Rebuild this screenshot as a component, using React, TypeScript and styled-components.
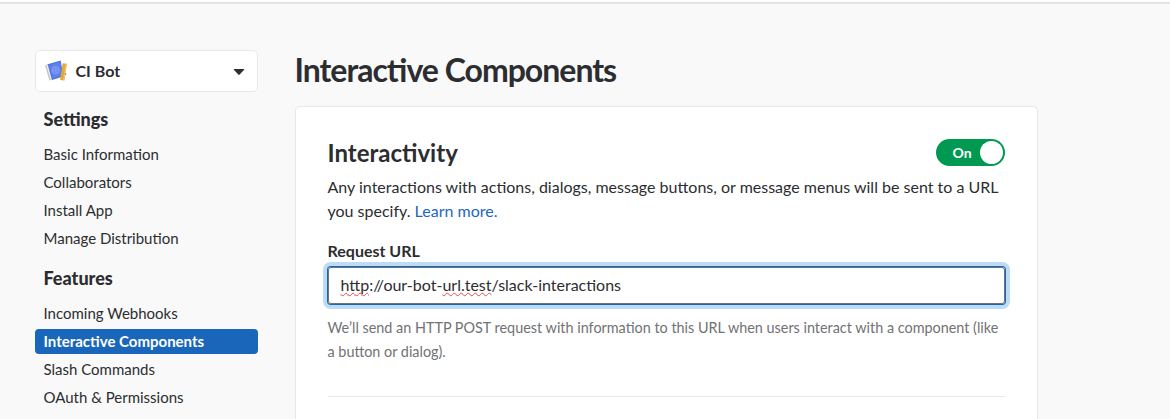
import React from "react";
import styled, { createGlobalStyle, css } from "styled-components";

const ink = "#2c2d30";

const GlobalStyle = createGlobalStyle`
  *, *::before, *::after { box-sizing: border-box; }
  html, body { height: 100%; overflow: hidden; }
  body {
    margin: 0;
    background: #f9f9f9;
    color: ${ink};
    font-family: Lato, "Open Sans", sans-serif;
    font-size: 15px;
    font-feature-settings: "liga" 1;
  }
  h1, h2, h3, p, ul { margin: 0; padding: 0; }
`;

const Page = styled.div`
  height: 419px;
  overflow: hidden;
`;

const TopBar = styled.header`
  height: 3px;
  background: #fff;
  border-bottom: 1px solid #dedede;
  box-shadow: 0 1px 1px rgba(0, 0, 0, 0.07);
`;

const Columns = styled.div`
  display: flex;
  align-items: flex-start;
  gap: 37px;
  padding: 47px 0 0 35px;
`;

const Sidebar = styled.nav`
  width: 223px;
  flex: none;
`;

const AppPicker = styled.button`
  display: flex;
  align-items: center;
  width: 100%;
  height: 42px;
  padding: 0 12px 0 9px;
  border: 1px solid #e8e8e8;
  border-radius: 5px;
  background: #fff;
  color: ${ink};
  font: 700 16px/24px Lato, sans-serif;
  text-align: left;
`;

const AppName = styled.span`
  flex: 1;
  margin-left: 8.5px;
`;

const NavHeading = styled.h3`
  margin: 14px 0 10px;
  padding-left: 8.5px;
  font-size: 18px;
  font-weight: 900;
  line-height: 26px;
`;

const NavList = styled.ul`
  display: flex;
  flex-direction: column;
  gap: 3px;
  list-style: none;
`;

const NavItem = styled.li<{ $active?: boolean }>`
  height: 25px;
  padding-left: 8.5px;
  border-radius: 4px;
  line-height: 25px;
  ${(p) =>
    p.$active &&
    css`
      background: #1a66ba;
      color: #fff;
      font-weight: 700;
    `}
`;

const Main = styled.main`
  width: 743px;
  flex: none;
`;

const Title = styled.h1`
  height: 42px;
  margin-left: -0.5px;
  font-size: 32px;
  font-weight: 700;
  line-height: 40px;
  letter-spacing: -1px;
`;

const Card = styled.section`
  height: 400px;
  margin-top: 14px;
  padding: 32px;
  border: 1px solid #e8e8e8;
  border-radius: 5px;
  background: #fff;
  box-shadow: 0 1px 2px rgba(0, 0, 0, 0.06);
`;

const CardHeader = styled.div`
  display: flex;
  align-items: flex-start;
  justify-content: space-between;
  height: 36px;
`;

const CardTitle = styled.h2`
  margin-left: -0.5px;
  font-size: 24px;
  font-weight: 700;
  line-height: 28px;
`;

const Toggle = styled.div`
  display: flex;
  align-items: center;
  justify-content: space-between;
  width: 69px;
  height: 27px;
  padding: 0 2px 0 16.5px;
  border-radius: 14px;
  background: #009952;
  color: #fff;
  font-size: 14px;
  font-weight: 700;
`;

const Knob = styled.span`
  width: 23px;
  height: 23px;
  border-radius: 50%;
  background: #fff;
`;

const Description = styled.p`
  margin-left: -0.5px;
  font-size: 16px;
  line-height: 24px;
`;

const Link = styled.a`
  color: #1d66c2;
`;

const Label = styled.label`
  display: block;
  margin: 16px 0 0 -0.5px;
  font-size: 16px;
  font-weight: 700;
  line-height: 24px;
`;

const UrlField = styled.div`
  height: 37px;
  margin: 4px 0 12px;
  padding: 0 11.5px;
  border: 1px solid #717274;
  border-radius: 3px;
  box-shadow: 0 0 0 1px #1a66ba, 0 0 0 5px #bcdcf5;
  font-size: 16px;
  line-height: 34px;
`;

const Misspelled = styled.span`
  text-decoration: underline wavy #e8494b 0.5px;
  text-decoration-skip-ink: none;
  text-underline-offset: 1px;
`;

const Hint = styled.p`
  margin-left: -0.5px;
  color: #717274;
  font-size: 14.4px;
  line-height: 24px;
`;

const Divider = styled.hr`
  margin: 32px 0 0;
  border: 0;
  border-top: 1px solid #e8e8e8;
`;

const BlueprintIcon = () => (
  <svg width="22" height="22" viewBox="0 0 22 22">
    <path d="M0 5.200 3 4l4.500 15.500-3.100 1Z" fill="#c3c5c6" />
    <path d="M1.400 5.200 3 4.500l4 15-1.200.5Z" fill="#ecece9" />
    <path d="m2.700 4.300 13-3.700 2.600 16-11.300 3.400Z" fill="#4d73e5" />
    <path d="m4.700 5.500 9.800-2.800 2 12.500-8.500 2.500Z" fill="#5d81ec" stroke="#6286ee" strokeWidth=".6" />
    <circle cx="10.600" cy="10.200" r="3.700" fill="#6d8df0" stroke="#86a1f5" strokeWidth=".8" />
    <path d="m7.500 11 6.200-1.600m-3.900-2.500 1.600 6.400" stroke="#86a1f5" strokeWidth=".6" />
    <path d="m17.600 3.300 4.200.5-2.500 16.700-4.200-.6Z" fill="#e3a936" />
    <path d="m20.600 3.700 1.200.1-2.500 16.700-1.200-.2Z" fill="#f1c365" />
    <path d="m20.100 13.200 1.100.2-.3 1.500-1.200-.2Z" fill="#8b8682" />
  </svg>
);

const Caret = () => (
  <svg width="12" height="10" viewBox="0 0 12 10">
    <path d="M1.200 3h9.600q.8 0 .3.700L6.700 8.600q-.7.700-1.400 0L.9 3.700Q.4 3 1.200 3Z" fill={ink} />
  </svg>
);

const settings = ["Basic Information", "Collaborators", "Install App", "Manage Distribution"];
const features = ["Incoming Webhooks", "Interactive Components", "Slash Commands", "OAuth & Permissions"];

export default function App() {
  return (
    <Page>
      <GlobalStyle />
      <TopBar />
      <Columns>
        <Sidebar>
          <AppPicker>
            <BlueprintIcon />
            <AppName>CI Bot</AppName>
            <Caret />
          </AppPicker>
          <NavHeading>Settings</NavHeading>
          <NavList>
            {settings.map((name) => (
              <NavItem key={name}>{name}</NavItem>
            ))}
          </NavList>
          <NavHeading>Features</NavHeading>
          <NavList>
            {features.map((name) => (
              <NavItem key={name} $active={name === "Interactive Components"}>
                {name}
              </NavItem>
            ))}
          </NavList>
        </Sidebar>
        <Main>
          <Title>Interactive Components</Title>
          <Card>
            <CardHeader>
              <CardTitle>Interactivity</CardTitle>
              <Toggle>
                On
                <Knob />
              </Toggle>
            </CardHeader>
            <Description>
              Any interactions with actions, dialogs, message buttons, or message menus will be sent to a URL you
              specify. <Link>Learn more.</Link>
            </Description>
            <Label>Request URL</Label>
            <UrlField>
              <Misspelled>http</Misspelled>://our-bot-<Misspelled>url.test</Misspelled>/slack-interactions
            </UrlField>
            <Hint>
              We’ll send an HTTP POST request with information to this URL when users interact with a component (like a
              button or dialog).
            </Hint>
            <Divider />
          </Card>
        </Main>
      </Columns>
    </Page>
  );
}
